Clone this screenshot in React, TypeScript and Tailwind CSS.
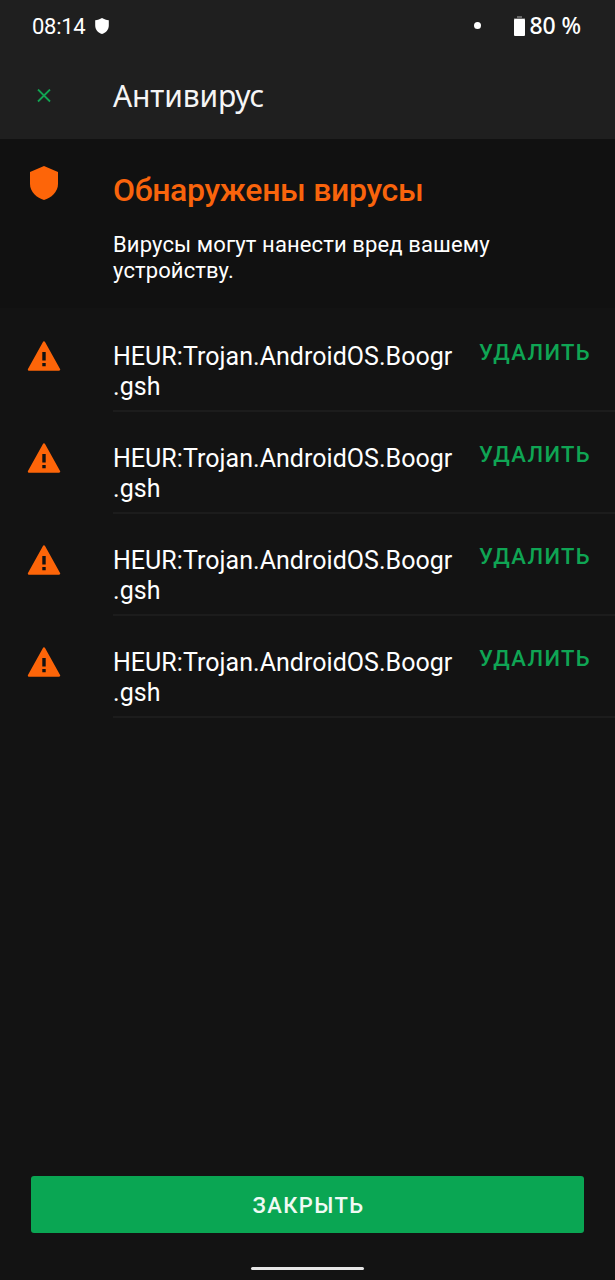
import { useState } from 'react';

interface Threat {
  id: number;
  name: string[];
}

const threats: Threat[] = [
  { id: 1, name: ['HEUR:Trojan.AndroidOS.Boogr', '.gsh'] },
  { id: 2, name: ['HEUR:Trojan.AndroidOS.Boogr', '.gsh'] },
  { id: 3, name: ['HEUR:Trojan.AndroidOS.Boogr', '.gsh'] },
  { id: 4, name: ['HEUR:Trojan.AndroidOS.Boogr', '.gsh'] },
];

function ShieldIcon({ className }: { className?: string }) {
  return (
    <svg viewBox="0 0 28 34" className={className} fill="currentColor" preserveAspectRatio="none">
      <path d="M14 0 L28 6 V18 C28 26 21 32 14 34 C7 32 0 26 0 18 V6 Z" />
    </svg>
  );
}

// Rounder than the in-app shield, used as the notification glyph
function StatusShieldIcon() {
  return (
    <svg viewBox="0 0 14 16" className="ml-[10px] h-4 w-[14px]" fill="currentColor">
      <path d="M7 0 C9 1.2 11.3 1.9 13.8 2.2 V7.5 C13.8 11.8 10.8 14.8 7 16 C3.2 14.8 0.2 11.8 0.2 7.5 V2.2 C2.7 1.9 5 1.2 7 0 Z" />
    </svg>
  );
}

function WarningIcon() {
  return (
    <svg viewBox="0 0 34 30" className="h-[30px] w-[34px]">
      <path
        d="M17 1.5 L32 28.5 H2 Z"
        fill="#fd6509"
        stroke="#fd6509"
        strokeWidth="2.4"
        strokeLinejoin="round"
      />
      <path d="M15.3 11 H18.7 V19.5 H15.3 Z M15.3 22 H18.7 V25.2 H15.3 Z" fill="#121212" />
    </svg>
  );
}

function StatusBar() {
  return (
    <div className="flex h-[52px] items-center pl-8 pr-[34px] text-white">
      <span className="pt-[2px] text-[22px] leading-none tracking-[-0.3px]">08:14</span>
      <StatusShieldIcon />
      <span className="mb-[2px] ml-auto mr-[33px] h-[7px] w-[7px] rounded-full bg-white" />
      <svg viewBox="0 0 11 20" className="mb-[1px] mr-[5px] h-5 w-[11px]">
        <path d="M3 0 H8 V2 H11 V5 H0 V2 H3 Z" fill="#666" />
        <rect y="3" width="11" height="17" rx="1" fill="#fff" />
      </svg>
      <span className="pb-[1px] font-['Noto_Sans',sans-serif] text-[23px] font-medium leading-none tracking-[-0.1px]">
        80 %
      </span>
    </div>
  );
}

function ThreatRow({ threat, onDelete }: { threat: Threat; onDelete: (id: number) => void }) {
  return (
    <li className="flex h-[102px]">
      <div className="w-[113px] pl-[27px] pt-[31px]">
        <WarningIcon />
      </div>
      <div className="flex flex-1 items-start justify-between border-b-2 border-[#1c1c1c] pr-6">
        <p className="pt-8 text-[25px] leading-[30px] tracking-[0.04px] text-white">
          {threat.name[0]}
          <br />
          {threat.name[1]}
        </p>
        <button
          onClick={() => onDelete(threat.id)}
          className="mt-[30px] text-[22px] font-medium leading-[26px] tracking-[1.35px] text-[#0fa554]"
        >
          УДАЛИТЬ
        </button>
      </div>
    </li>
  );
}

export default function App() {
  const [items, setItems] = useState(threats);

  const handleDelete = (id: number) => {
    setItems((list) => list.filter((t) => t.id !== id));
  };

  return (
    <div className="flex h-[1280px] w-[615px] flex-col overflow-hidden bg-[#131313] font-['Roboto',sans-serif]">
      {/* Header */}
      <header className="h-[139px] bg-[#1f1f1f]">
        <StatusBar />
        <div className="flex h-[87px] items-center">
          <button className="w-[113px] pl-[37px]">
            <svg viewBox="0 0 14 14" className="h-[14px] w-[14px]" stroke="#12a452" strokeWidth="1.8">
              <path d="M1 0.5 L13 12.5 M13 0.5 L1 12.5" />
            </svg>
          </button>
          <h1 className="font-['Noto_Sans',sans-serif] text-[30px] leading-none tracking-[-0.1px] text-[#f5f5f5]">
            Антивирус
          </h1>
        </div>
      </header>

      {/* Summary */}
      <section className="flex h-[169px] bg-[#111111]">
        <div className="w-[113px] pl-[30px] pt-[27px] text-[#fd6509]">
          <ShieldIcon className="h-[34px] w-7" />
        </div>
        <div>
          <h2 className="mt-8 text-[32px] font-medium leading-[38px] tracking-[-0.32px] text-[#f9640c]">
            Обнаружены вирусы
          </h2>
          <p className="mt-[23px] text-[22px] leading-[26px] tracking-[0.12px] text-white">
            Вирусы могут нанести вред вашему
            <br />
            устройству.
          </p>
        </div>
      </section>

      {/* Threat list */}
      <ul className="flex-1 pt-[2px]">
        {items.map((threat) => (
          <ThreatRow key={threat.id} threat={threat} onDelete={handleDelete} />
        ))}
      </ul>

      {/* Footer */}
      <footer className="flex flex-col items-center px-[31px]">
        <button className="h-[57px] w-full rounded-[3px] bg-[#0aa653] pl-[2px] pt-[2px] text-[22px] font-medium tracking-[1.4px] text-[#f0faf4]">
          ЗАКРЫТЬ
        </button>
        <div className="mb-[10px] mt-[34px] h-[3px] w-[113px] rounded-full bg-[#e6e6e6]" />
      </footer>
    </div>
  );
}
